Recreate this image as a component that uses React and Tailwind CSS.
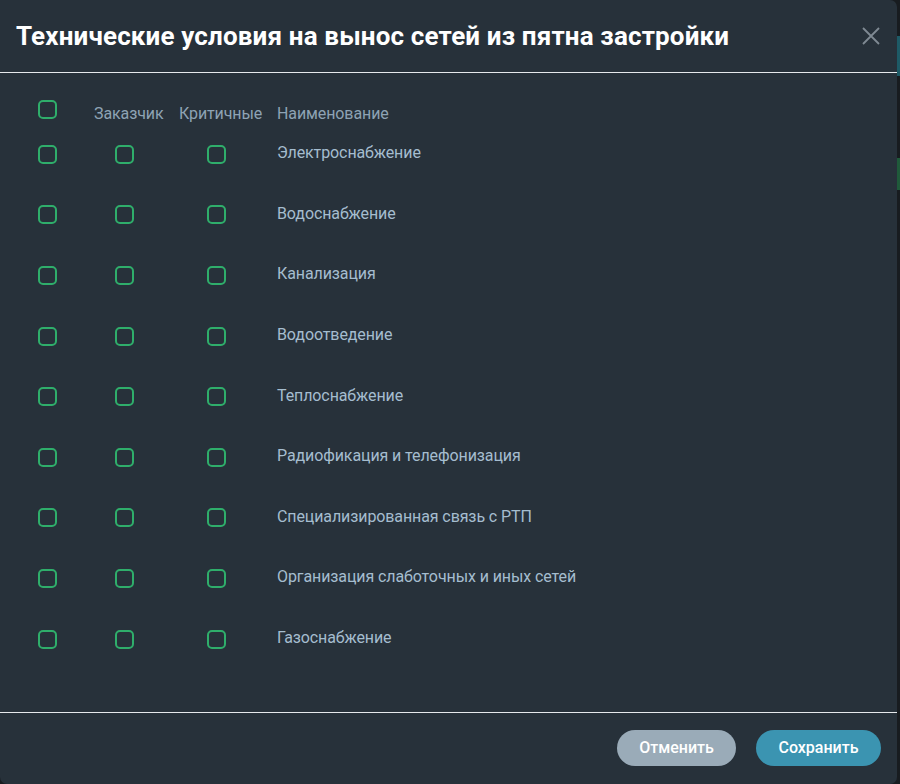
import React, { useState } from 'react';

const items = [
    'Электроснабжение',
    'Водоснабжение',
    'Канализация',
    'Водоотведение',
    'Теплоснабжение',
    'Радиофикация и телефонизация',
    'Специализированная связь с РТП',
    'Организация слаботочных и иных сетей',
    'Газоснабжение',
];

const Box = ({ checked, onClick }) => (
    <button
        onClick={onClick}
        className="w-[19px] h-[19px] rounded-[5px] border-2 border-[#2fae6b] bg-transparent flex items-center justify-center"
    >
        {checked && <span className="w-[9px] h-[9px] rounded-[2px] bg-[#2fae6b]" />}
    </button>
);

const App = () => {
    const [checks, setChecks] = useState({});
    const toggle = (key) => setChecks((c) => ({ ...c, [key]: !c[key] }));

    return (
        <div className="flex w-[900px] h-[784px] bg-[#181c20]" style={{ fontFamily: 'Roboto, "Noto Sans", sans-serif' }}>
            <div className="w-[897px] h-[784px] bg-[#27313a] rounded-r-[7px] rounded-bl-[7px] flex flex-col">
                {/* header */}
                <div className="h-[72px] flex items-center justify-between pl-4 pr-4">
                    <h2 className="text-[26px] font-bold text-white leading-none tracking-[0.15px] -mt-[1px]">
                        Технические условия на вынос сетей из пятна застройки
                    </h2>
                    <button className="w-[20px] h-[20px] flex items-center justify-center text-[#7f8a93]">
                        <svg width="18" height="18" viewBox="0 0 18 18" fill="none" stroke="currentColor" strokeWidth="1.8">
                            <path d="M1 1 L17 17 M17 1 L1 17" />
                        </svg>
                    </button>
                </div>
                <div className="h-px bg-[#e6e9ec]" />

                {/* table */}
                <div className="flex-1 flex flex-col">
                    <div className="h-[51px] grid grid-cols-[86px_85px_98px_1fr] items-end">
                        <div className="pl-[38px] self-start pt-[27px]">
                            <Box checked={checks.all} onClick={() => toggle('all')} />
                        </div>
                        <div className="pl-2 text-[16px] text-[#8ea3b4] leading-5 tracking-[-0.1px]">Заказчик</div>
                        <div className="pl-2 text-[16px] text-[#8ea3b4] leading-5 tracking-[-0.1px]">Критичные</div>
                        <div className="pl-2 text-[16px] text-[#8ea3b4] leading-5 tracking-[-0.1px]">Наименование</div>
                    </div>
                    {items.map((name, i) => (
                        <div key={name} className="h-[60.6px] grid grid-cols-[86px_85px_98px_1fr] items-center">
                            <div className="pl-[38px]">
                                <Box checked={checks['a' + i]} onClick={() => toggle('a' + i)} />
                            </div>
                            <div className="pl-[29px]">
                                <Box checked={checks['b' + i]} onClick={() => toggle('b' + i)} />
                            </div>
                            <div className="pl-[36px]">
                                <Box checked={checks['c' + i]} onClick={() => toggle('c' + i)} />
                            </div>
                            <div className="pl-2 text-[16px] text-[#a5bdcf] leading-5 tracking-[-0.1px] -mt-[2px]">{name}</div>
                        </div>
                    ))}
                </div>

                {/* footer */}
                <div className="h-px bg-[#e6e9ec] mt-auto" />
                <div className="h-[71px] flex items-start justify-end gap-5 pt-[17px] pr-4">
                    <button className="h-[36px] w-[119px] rounded-full bg-[#9aabb8] text-white text-[16px] font-medium">
                        Отменить
                    </button>
                    <button className="h-[36px] w-[125px] rounded-full bg-[#3b94b1] text-white text-[16px] font-medium">
                        Сохранить
                    </button>
                </div>
            </div>
            <div className="w-[3px] flex flex-col">
                <div className="h-[36px]" />
                <div className="h-[40px] bg-[#1d5a66]" />
                <div className="h-[82px]" />
                <div className="h-[32px] bg-[#1f5a3a]" />
            </div>
        </div>
    );
};

export default App;
